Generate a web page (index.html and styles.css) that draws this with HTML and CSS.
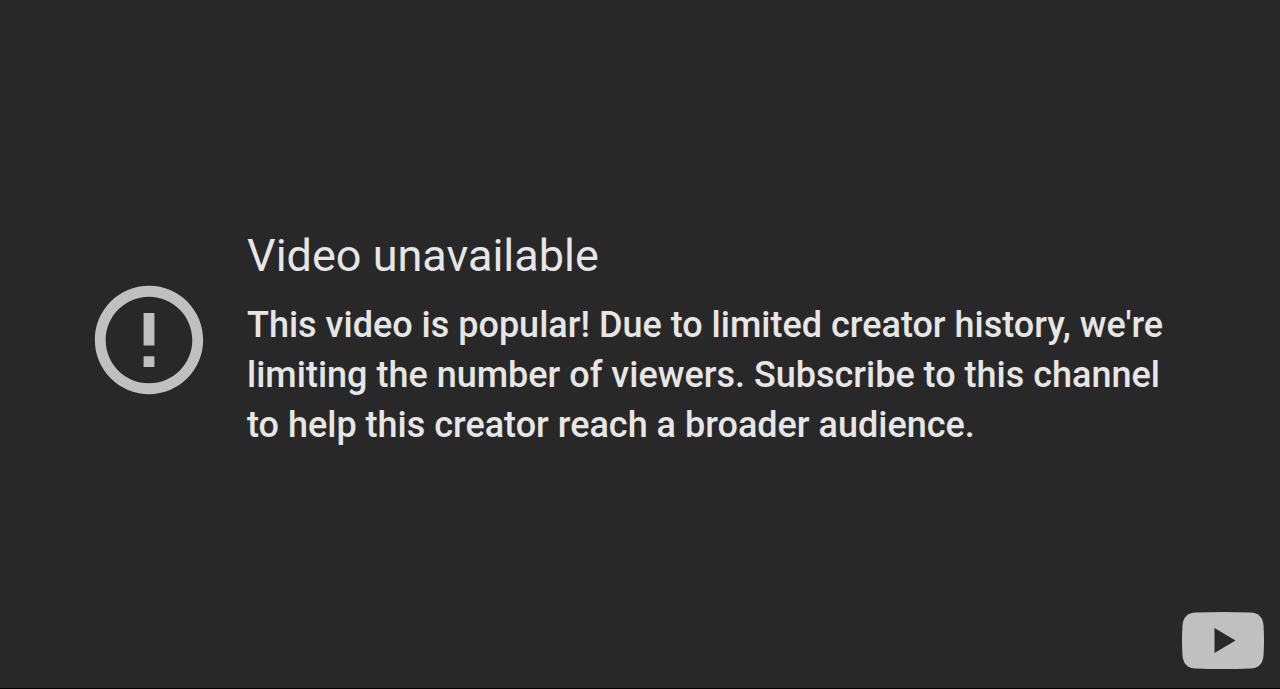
FILE: index.html
```
<!DOCTYPE html>
<html lang="en">
<head>
    <meta charset="UTF-8">
    <meta name="viewport" content="width=device-width, initial-scale=1.0">
    <title>Video unavailable</title>
    <link rel="stylesheet" href="styles.css">
</head>
<body>
    <main class="player">
        <div class="error">
            <svg class="error-icon" viewBox="0 0 24 24" aria-hidden="true">
                <path d="M11 15h2v2h-2zm0-8h2v6h-2zm1-5C6.48 2 2 6.48 2 12s4.48 10 10 10 10-4.48 10-10S17.52 2 12 2zm0 18c-4.42 0-8-3.58-8-8s3.58-8 8-8 8 3.58 8 8-3.58 8-8 8z"/>
            </svg>
            <div class="error-text">
                <h1>Video unavailable</h1>
                <p>This video is popular! Due to limited creator history, we're limiting the number of viewers. Subscribe to this channel to help this creator reach a broader audience.</p>
            </div>
        </div>

        <a class="logo" href="#" aria-label="Watch on YouTube">
            <svg viewBox="0 0 82 57" aria-hidden="true">
                <path class="logo-body" d="M14 .5Q41-.5 68 .5C77 1 80.500 5 81.500 13Q82.500 28 81.500 44C80.500 52 77 56 68 56.500Q41 57.500 14 56.500C5 56 1.500 52 .5 44Q-.5 28 .5 13C1.500 5 5 1 14 .5z"/>
                <path class="logo-play" d="M32.500 16v25l21-12.500z"/>
            </svg>
        </a>
    </main>
</body>
</html>
```
FILE: styles.css
```
* {
    box-sizing: border-box;
}

body {
    margin: 0;
    background-color: #282828;
    color: #e6e6e6;
    font-family: Roboto, "Liberation Sans", sans-serif;
}

.player {
    position: relative;
    display: flex;
    align-items: center;
    min-height: 100vh;
    padding: 0 84px 8px;
    border-bottom: 1px solid #000;
}

.error {
    display: flex;
    align-items: center;
    gap: 33px;
    width: 100%;
}

.error-icon {
    flex: none;
    width: 130px;
    height: 130px;
    fill: #c0c0c0;
}

.error-text {
    flex: 1;
}

.error-text h1 {
    margin: 0 0 18px;
    font-size: 45px;
    font-weight: 400;
    line-height: 52px;
}

.error-text p {
    margin: 0;
    font-size: 36px;
    font-weight: 500;
    line-height: 50px;
}

/* Logo in the corner of the player */
.logo {
    position: absolute;
    right: 16px;
    bottom: 19px;
    width: 82px;
    height: 57px;
}

.logo svg {
    display: block;
    width: 100%;
    height: 100%;
}

.logo-body {
    fill: #c0c0c0;
}

.logo-play {
    fill: #282828;
}
```
